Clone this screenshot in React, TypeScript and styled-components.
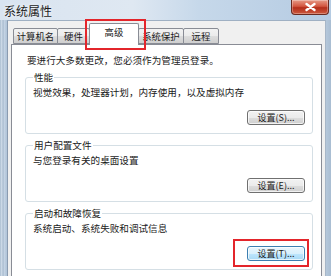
import styled, { createGlobalStyle, css } from "styled-components";

const GlobalStyle = createGlobalStyle`
  html, body {
    margin: 0;
    padding: 0;
    background: #ffffff;
  }
  body {
    font-family: "Noto Sans CJK SC", "Liberation Sans", sans-serif;
    color: #1a1a1a;
  }
`;

interface TabInfo {
  label: string;
  width: number;
  active?: boolean;
}

const tabs: TabInfo[] = [
  { label: "计算机名", width: 45 },
  { label: "硬件", width: 33 },
  { label: "高级", width: 50, active: true },
  { label: "系统保护", width: 46 },
  { label: "远程", width: 36 },
];

interface GroupInfo {
  title: string;
  text: string;
  button: string;
  marked?: boolean;
}

const groups: GroupInfo[] = [
  {
    title: "性能",
    text: "视觉效果，处理器计划，内存使用，以及虚拟内存",
    button: "设置(S)...",
  },
  {
    title: "用户配置文件",
    text: "与您登录有关的桌面设置",
    button: "设置(E)...",
  },
  {
    title: "启动和故障恢复",
    text: "系统启动、系统失败和调试信息",
    button: "设置(T)...",
    marked: true,
  },
];

export default function App() {
  return (
    <>
      <GlobalStyle />
      <Window>
        <TitleBar>
          <Title>系统属性</Title>
          <CloseButton>
            <svg width="13" height="10" viewBox="0 0 13 10">
              <path
                d="M2.5 2 L10.5 8 M10.5 2 L2.5 8"
                stroke="#ffffff"
                strokeWidth="2.4"
                strokeLinecap="round"
              />
            </svg>
          </CloseButton>
        </TitleBar>
        <Body>
          <TabRow>
            {tabs.map((t) => (
              <Tab key={t.label} $width={t.width} $active={!!t.active}>
                {t.label}
              </Tab>
            ))}
          </TabRow>
          <Panel>
            <Intro>要进行大多数更改，您必须作为管理员登录。</Intro>
            {groups.map((g) => (
              <Group key={g.title}>
                <Legend>{g.title}</Legend>
                <GroupText>{g.text}</GroupText>
                <ButtonRow>
                  <Button $focused={!!g.marked}>{g.button}</Button>
                </ButtonRow>
              </Group>
            ))}
          </Panel>
        </Body>
      </Window>
    </>
  );
}

const redMark = css`
  &::after {
    content: "";
    position: absolute;
    border: 2px solid #e3252b;
    pointer-events: none;
  }
`;

const Window = styled.div`
  width: 331px;
  height: 276px;
  overflow: hidden;
  display: flex;
  flex-direction: column;
  background: linear-gradient(
      90deg,
      #a9bccf 0,
      #d6e2ee 2px,
      #9aafc5 3px,
      #c9d7e6 4px,
      #b3c6da 6px,
      #c2d3e4 320px,
      #a9bdd2 100%
    );
`;

const TitleBar = styled.div`
  height: 20px;
  display: flex;
  align-items: flex-start;
  background: linear-gradient(
    90deg,
    #d9e4f0 0,
    #dfe8f2 40%,
    #c6d8ea 60%,
    #b5cbe2 100%
  );
`;

const Title = styled.div`
  padding: 3px 0 0 4px;
  font-size: 12px;
  line-height: 15px;
  color: #1c1c1c;
  text-shadow: 0 0 4px #ffffff;
`;

const CloseButton = styled.div`
  margin: 0 2px 0 auto;
  width: 36px;
  height: 14px;
  display: flex;
  align-items: center;
  justify-content: center;
  border: 1px solid #6a2a20;
  border-top: 0;
  border-radius: 0 0 4px 4px;
  background: linear-gradient(180deg, #e69a87 0, #d35640 45%, #b42e1b 55%, #cc5a3f 100%);
  box-shadow: inset 0 0 0 1px rgba(255, 255, 255, 0.3);
`;

const Body = styled.div`
  flex: 1;
  margin: 0 5px 0 7px;
  padding: 2px 3px 0 3px;
  display: flex;
  flex-direction: column;
  background: #f0f0f0;
  border-left: 1px solid #8a9bb0;
  border-right: 1px solid #a7b6c7;
  border-top: 1px solid #9fb0c3;
`;

const TabRow = styled.div`
  height: 21px;
  display: flex;
  align-items: flex-end;
  padding-left: 3px;
`;

const Tab = styled.div<{ $width: number; $active: boolean }>`
  position: relative;
  box-sizing: border-box;
  width: ${({ $width }) => $width}px;
  height: ${({ $active }) => ($active ? 22 : 16)}px;
  margin-left: -1px;
  margin-bottom: ${({ $active }) => ($active ? -1 : 0)}px;
  display: flex;
  align-items: ${({ $active }) => ($active ? "flex-start" : "center")};
  justify-content: center;
  padding-top: ${({ $active }) => ($active ? 2 : 0)}px;
  font-size: 9.4px;
  line-height: 12px;
  color: #1a1a1a;
  border: 1px solid #898c95;
  border-bottom: ${({ $active }) => ($active ? "0" : "1px solid #898c95")};
  border-radius: 2px 2px 0 0;
  background: ${({ $active }) =>
    $active
      ? "#ffffff"
      : "linear-gradient(180deg, #f2f2f2 0, #ebebeb 50%, #dddddd 51%, #cfcfcf 100%)"};
  z-index: ${({ $active }) => ($active ? 2 : 1)};
  ${({ $active }) =>
    $active &&
    css`
      ${redMark}
      &::after {
        left: -5px;
        right: -8px;
        top: -5px;
        bottom: -5px;
      }
    `}
`;

const Panel = styled.div`
  flex: 1;
  display: flex;
  flex-direction: column;
  gap: 5px;
  padding: 9px 8px 0 13px;
  background: #ffffff;
  border: 1px solid #898c95;
  border-bottom: 0;
`;

const Intro = styled.div`
  margin-left: 2px;
  font-size: 9.6px;
  line-height: 12px;
`;

const Group = styled.fieldset`
  margin: 0;
  padding: 3px 7px 8px 7px;
  border: 1px solid #d5dfe5;
  border-radius: 3px;
  min-width: 0;
`;

const Legend = styled.legend`
  padding: 0 1px;
  font-size: 9.6px;
  line-height: 12px;
  color: #1a1a1a;
`;

const GroupText = styled.div`
  font-size: 9.6px;
  line-height: 12px;
`;

const ButtonRow = styled.div`
  display: flex;
  justify-content: flex-end;
  margin-top: 12px;
`;

const Button = styled.div<{ $focused: boolean }>`
  position: relative;
  box-sizing: border-box;
  width: 58px;
  height: 15px;
  display: flex;
  align-items: center;
  justify-content: center;
  font-size: 9px;
  line-height: 12px;
  color: #1a1a1a;
  border-radius: 3px;
  border: 1px solid ${({ $focused }) => ($focused ? "#3c7fb1" : "#707070")};
  background: ${({ $focused }) =>
    $focused
      ? "linear-gradient(180deg, #eaf6fd 0, #d9f0fc 50%, #bee6fd 51%, #a7d9f5 100%)"
      : "linear-gradient(180deg, #f2f2f2 0, #ebebeb 50%, #dddddd 51%, #cfcfcf 100%)"};
  box-shadow: inset 0 0 0 1px rgba(255, 255, 255, 0.7);
  ${({ $focused }) =>
    $focused &&
    css`
      ${redMark}
      &::after {
        left: -15px;
        right: -5px;
        top: -8px;
        bottom: -7px;
      }
    `}
`;
